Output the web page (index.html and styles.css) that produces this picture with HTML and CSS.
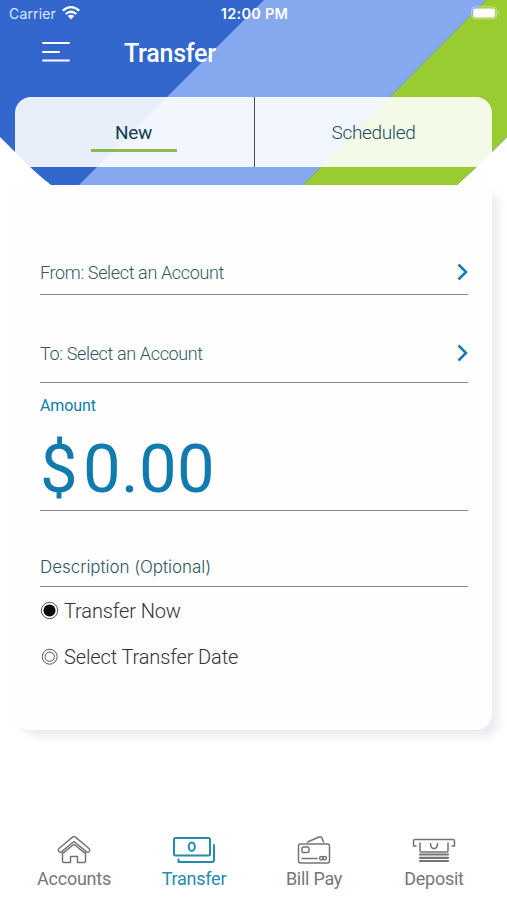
FILE: index.html
```html
<!DOCTYPE html>
<html lang="en">
<head>
<meta charset="utf-8">
<title>Transfer</title>
<link rel="stylesheet" href="styles.css">
</head>
<body>
<div class="app">
  <header class="header">
    <svg class="backdrop" viewBox="0 0 507 185" aria-hidden="true">
      <path fill="#3367cd" d="M0 0H507V137L492 152Q475 169 457 185H51Q33 171 16 153L0 137Z"/>
      <path fill="#85a8ef" d="M264 0H486L303 185H79Z"/>
      <path fill="#99cc31" d="M486 0H507V137L492 152Q475 169 457 185H303Z"/>
    </svg>
    <div class="status">
      <div class="carrier"><span>Carrier</span>
        <svg width="18" height="14" viewBox="0 0 18 14" fill="none" stroke="#fff" stroke-width="2.3"><path d="M.8 4.7Q9-2.5 17.2 4.7M3.7 8Q9 3.4 14.3 8"/><path fill="#fff" stroke="none" d="M5.8 10Q9 7.5 12.2 10L9 13.5Z"/></svg>
      </div>
      <span class="clock">12:00 PM</span>
      <svg class="battery" width="29" height="14" viewBox="0 0 29 14"><rect x=".7" y=".8" width="25" height="12" rx="3.5" fill="none" stroke="#fff" stroke-opacity=".45"/><rect x="2.2" y="2.4" width="22" height="9" rx="2" fill="#fff"/><path fill="#fff" fill-opacity=".55" d="M27 4.5Q29 6.8 27 9Z"/></svg>
    </div>
    <div class="titlebar">
      <svg class="menu" width="28" height="22" viewBox="0 0 28 22" stroke="#fff" stroke-width="2" stroke-linecap="round"><path d="M1 2H27M1 11H17M1 19.500H27"/></svg>
      <h1>Transfer</h1>
    </div>
    <nav class="tabs">
      <div class="tab active"><span>New</span></div>
      <div class="tab"><span>Scheduled</span></div>
    </nav>
  </header>
  <main class="card">
    <div class="field from"><span>From: Select an Account</span><svg width="12" height="18" viewBox="0 0 12 18"><path d="M2.500 1.500L10 9L2.500 16.500"/></svg></div>
    <div class="field to"><span>To: Select an Account</span><svg width="12" height="18" viewBox="0 0 12 18"><path d="M2.500 1.500L10 9L2.500 16.500"/></svg></div>
    <div class="amount"><label>Amount</label><div class="value"><span class="currency">$</span><span>0.00</span></div></div>
    <div class="field description"><span>Description (Optional)</span></div>
    <div class="options">
      <div class="option"><svg width="20" height="20" viewBox="0 0 20 20"><circle cx="9.500" cy="9.500" r="8.200" fill="none" stroke="#555"/><circle cx="9.500" cy="9.500" r="6" fill="#080808"/></svg><span>Transfer Now</span></div>
      <div class="option"><svg width="20" height="20" viewBox="0 0 20 20" fill="none" stroke="#555"><circle cx="9.700" cy="9.700" r="7.500"/><circle cx="9.700" cy="9.700" r="4.700"/></svg><span>Select Transfer Date</span></div>
    </div>
  </main>
  <footer class="bottom">
    <div class="item"><svg width="44" height="32" viewBox="0 0 44 32"><path d="M20.500 3.200Q22 2 23.500 3.200L37 14.500Q38.500 16 37.300 17.500Q36 19 34.300 17.700L22 7.500L9.700 17.700Q8 19 6.700 17.500Q5.500 16 7 14.500ZM10.500 18.500V27Q10.500 28.500 12 28.500H18.500V22.500H25.500V28.500H32Q33.500 28.500 33.500 27V18.500M11.500 18.800L21 11Q22 10.200 23 11L32.500 18.800"/></svg><span>Accounts</span></div>
    <div class="item selected"><svg width="44" height="32" viewBox="0 0 44 32"><rect x="2" y="4" width="36" height="17.500" rx="1.500"/><ellipse cx="19.800" cy="12.700" rx="3" ry="4.300"/><path d="M42 11V26Q42 28 40 28H6.500V25.500"/></svg><span>Transfer</span></div>
    <div class="item"><svg width="44" height="32" viewBox="0 0 44 32"><rect x="6.500" y="10" width="31" height="19" rx="2"/><rect x="10" y="13" width="7" height="5.500" rx="1.300"/><path d="M10 24.500H25M15.500 8L27 3Q29 2.300 30 4L31.500 8"/><circle cx="29.300" cy="24.300" r="1.700"/><circle cx="32.700" cy="24.300" r="1.700"/></svg><span>Bill Pay</span></div>
    <div class="item"><svg width="44" height="32" viewBox="0 0 44 32"><path d="M4 12H1.500V7Q1.500 5.500 3 5.500H41Q42.500 5.500 42.500 7V12H40M8 9V17Q8 18 9 18H35Q36 18 36 17V9M18.500 9.500Q18.500 14.500 22 14.500T25.500 9.500"/><path stroke-width="2.200" d="M8 20.500H36M8 23.800H36M8 27H36"/></svg><span>Deposit</span></div>
  </footer>
</div>
</body>
</html>
```
FILE: styles.css
```css
* { box-sizing: border-box; }
body { margin: 0; background: #fff; font-family: Roboto, sans-serif; }
svg { display: block; flex: none; }
.app { width: 507px; height: 900px; display: flex; flex-direction: column; overflow: hidden; }
.header { position: relative; z-index: 1; height: 185px; flex: none; display: flex; flex-direction: column; }
.backdrop { position: absolute; left: 0; top: 0; width: 507px; height: 185px; z-index: -1; }
.status { height: 28px; display: grid; grid-template-columns: 1fr auto 1fr; align-items: center; padding: 0 7px 2px 9px; color: #fff; font-family: Inter, sans-serif; }
.carrier { display: flex; align-items: center; gap: 6px; font-size: 14px; letter-spacing: .15px; color: #dde7ff; }
.clock { font-size: 14.500px; font-weight: 600; letter-spacing: .25px; }
.battery { justify-self: end; }
.titlebar { height: 69px; display: flex; align-items: flex-start; padding: 13px 0 0 42px; }
.menu { flex: none; }
h1 { margin: -3px 0 0 54px; color: #fff; font-size: 25px; line-height: 32px; font-weight: 500; letter-spacing: -.25px; }
.tabs { width: 477px; height: 70px; margin-left: 15px; display: grid; grid-template-columns: 240px 1fr; border-radius: 16px 16px 0 0; background: rgba(255,255,255,.89); }
.tab { display: flex; justify-content: center; padding-top: 24px; font-size: 19px; line-height: 24px; font-weight: 300; letter-spacing: -.35px; color: #234c61; }
.active { padding-right: 2px; border-right: 1px solid #444b55; font-weight: 400; color: #113d4d; }
.active span { width: 86px; height: 31px; text-align: center; border-bottom: 3px solid #8bb84f; }
.card { width: 484px; height: 545px; flex: none; margin-left: 8px; padding: 0 24px 0 32px; background: #fefefe; border-radius: 0 8px 16px 24px; box-shadow: 8px 8px 10px -2px rgba(80,80,135,.12); }
.field { display: flex; justify-content: space-between; border-bottom: 1.500px solid #888; color: #315765; font-size: 18px; line-height: 24px; font-weight: 300; letter-spacing: -.36px; }
.field svg { margin-top: 2px; fill: none; stroke: #137bad; stroke-width: 2.500px; }
.from { height: 110px; padding-top: 76px; }
.to { height: 88px; padding-top: 47px; }
.amount { height: 128px; padding-top: 12px; border-bottom: 1.500px solid #888; color: #117bae; }
.amount label { display: block; font-size: 16px; line-height: 22px; letter-spacing: -.1px; }
.value { display: flex; align-items: center; height: 86px; margin-top: 9px; font-size: 67px; line-height: 86px; letter-spacing: .3px; }
.currency { width: 43px; }
.description { height: 76px; padding-top: 44px; font-family: Inter, sans-serif; font-size: 17px; letter-spacing: -.05px; }
.options { padding-top: 1px; }
.option { height: 46px; display: flex; align-items: center; gap: 4px; color: #333; font-size: 20px; font-weight: 300; letter-spacing: -.12px; }
.bottom { width: 480px; margin: 104px 0 0 14px; display: grid; grid-template-columns: repeat(4, 1fr); }
.item { display: flex; flex-direction: column; align-items: center; gap: 1px; color: #777; font-size: 18px; line-height: 24px; letter-spacing: -.25px; }
.item svg { fill: none; stroke: #747474; stroke-width: 1.500px; stroke-linejoin: round; stroke-linecap: round; }
.item.selected { color: #248bad; }
.selected svg { stroke: #248bad; stroke-width: 2px; }
```
